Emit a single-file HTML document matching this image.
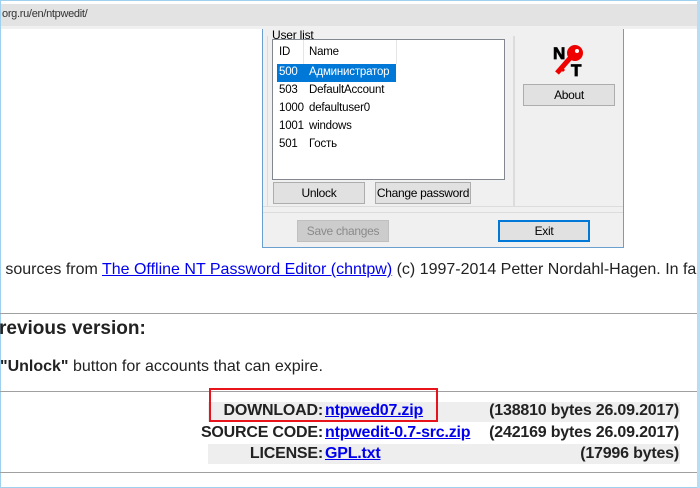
<!DOCTYPE html><html><head><meta charset="utf-8"><style>
body{margin:0;width:700px;height:488px;overflow:hidden;background:#fff;font-family:"Liberation Sans",sans-serif;position:relative}
.a{position:absolute}
.btn{position:absolute;background:#e1e1e1;border:1px solid #adadad;font-size:12px;text-align:center;box-sizing:border-box;color:#000;white-space:nowrap;letter-spacing:-0.3px}
.w{font-size:11.5px;color:#000;white-space:nowrap;letter-spacing:-0.2px}
a{color:#00e;text-decoration:underline}
.hr{position:absolute;left:0;width:697px;height:1px;background:#a0a0a0}
.t{position:absolute;font-size:16px;font-weight:bold;color:#222;white-space:nowrap;letter-spacing:-0.2px}
</style></head><body>
<div class="a" style="left:0;top:0;width:700px;height:488px;border:1px solid #9fd0ee;box-sizing:border-box"></div>
<div class="a" style="left:697px;top:0;width:3px;height:488px;background:#b8dcf2"></div>
<div class="a" style="left:1px;top:4px;width:696px;height:22px;background:#e3e3e3"></div>
<div class="a" style="left:1px;top:26px;width:696px;height:3px;background:#f0f0f0"></div>
<div class="a" style="left:2px;top:8px;font-size:11px;color:#333;letter-spacing:-0.3px">org.ru/en/ntpwedit/</div>
<div class="a" style="left:262px;top:36px;width:362px;height:212px;background:#f0f0f0;border:1px solid #6a9fd0;border-top:none;box-sizing:border-box"></div>
<div class="a" style="left:262px;top:29px;width:362px;height:8px;background:#f0f0f0;border-left:1px solid #6a9fd0;border-right:1px solid #6a9fd0;box-sizing:border-box"></div>
<div class="a" style="left:267px;top:36px;width:246px;height:170px;border:1px solid #dcdcdc;border-top:none"></div>
<div class="a" style="left:513px;top:36px;width:1px;height:170px;background:#dcdcdc"></div>
<div class="a" style="left:263px;top:206px;width:360px;height:1px;background:#dcdcdc"></div>
<div class="a" style="left:263px;top:212px;width:360px;height:1px;background:#dcdcdc"></div>
<div class="a w" style="left:272px;top:28px;background:#f0f0f0;padding-right:2px;font-size:12px">User list</div>
<div class="a" style="left:272px;top:39px;width:233px;height:141px;background:#fff;border:1px solid #828790;box-sizing:border-box"></div>
<div class="a" style="left:303px;top:40px;width:1px;height:24px;background:#e5e5e5"></div>
<div class="a" style="left:396px;top:40px;width:1px;height:24px;background:#e5e5e5"></div>
<div class="a w" style="left:279px;top:46px">ID</div>
<div class="a w" style="left:309px;top:46px">Name</div>
<div class="a" style="left:277px;top:64px;width:119px;height:18px;background:#0078d7"></div>
<div class="a w" style="left:279px;top:66px;color:#fff">500</div><div class="a w" style="left:309px;top:66px;color:#fff">Администратор</div>
<div class="a w" style="left:279px;top:84px">503</div><div class="a w" style="left:309px;top:84px">DefaultAccount</div>
<div class="a w" style="left:279px;top:102px">1000</div><div class="a w" style="left:309px;top:102px">defaultuser0</div>
<div class="a w" style="left:279px;top:120px">1001</div><div class="a w" style="left:309px;top:120px">windows</div>
<div class="a w" style="left:279px;top:138px">501</div><div class="a w" style="left:309px;top:138px">Гость</div>
<div class="btn" style="left:273px;top:182px;width:92px;height:22px;line-height:20px">Unlock</div>
<div class="btn" style="left:375px;top:182px;width:96px;height:22px;line-height:20px">Change password</div>
<div class="btn" style="left:523px;top:84px;width:92px;height:22px;line-height:20px">About</div>
<div class="btn" style="left:297px;top:220px;width:92px;height:22px;line-height:20px;color:#8a8a8a;background:#ccc;border-color:#bfbfbf">Save changes</div>
<div class="btn" style="left:498px;top:220px;width:92px;height:22px;line-height:18px;border:2px solid #0078d7">Exit</div>
<svg class="a" style="left:553px;top:44px" width="34" height="34" viewBox="0 0 34 34">
<text x="0" y="15" font-family="Liberation Sans" font-weight="900" font-size="17" stroke="#000" stroke-width="0.8">N</text>
<text x="18" y="32" font-family="Liberation Sans" font-weight="900" font-size="17" stroke="#000" stroke-width="0.8">T</text>
<path d="M4 29 L18 13" stroke="#e00" stroke-width="5"/>
<path d="M8 24 L11 27" stroke="#e00" stroke-width="3"/>
<circle cx="22" cy="9" r="8" fill="#e00"/>
<circle cx="24" cy="7" r="2" fill="#fff"/>
</svg>
<div class="a" style="left:-8px;top:261px;font-size:16px;color:#222;white-space:nowrap">n sources from <a>The Offline NT Password Editor (chntpw)</a> (c) 1997-2014 Petter Nordahl-Hagen. In fa</div>
<div class="hr" style="top:313px"></div>
<div class="a" style="left:-1px;top:318px;font-size:19px;font-weight:bold;color:#222">revious version:</div>
<div class="a" style="left:0;top:358px;font-size:16px;color:#222"><b>"Unlock"</b> button for accounts that can expire.</div>
<div class="hr" style="top:391px"></div>
<div class="a" style="left:208px;top:402px;width:472px;height:20px;background:#eee"></div>
<div class="a" style="left:208px;top:444px;width:472px;height:20px;background:#eee"></div>
<div class="t" style="right:377px;top:402px">DOWNLOAD:</div><div class="t" style="left:325px;top:402px"><a>ntpwed07.zip</a></div><div class="t" style="right:21px;top:402px">(138810 bytes 26.09.2017)</div>
<div class="t" style="right:377px;top:424px">SOURCE CODE:</div><div class="t" style="left:325px;top:424px"><a>ntpwedit-0.7-src.zip</a></div><div class="t" style="right:21px;top:424px">(242169 bytes 26.09.2017)</div>
<div class="t" style="right:377px;top:445px">LICENSE:</div><div class="t" style="left:325px;top:445px"><a>GPL.txt</a></div><div class="t" style="right:21px;top:445px">(17996 bytes)</div>
<div class="a" style="left:209px;top:388px;width:229px;height:34px;border:2px solid #e8141b;box-sizing:border-box"></div>
<div class="hr" style="top:472px"></div>
</body></html>
